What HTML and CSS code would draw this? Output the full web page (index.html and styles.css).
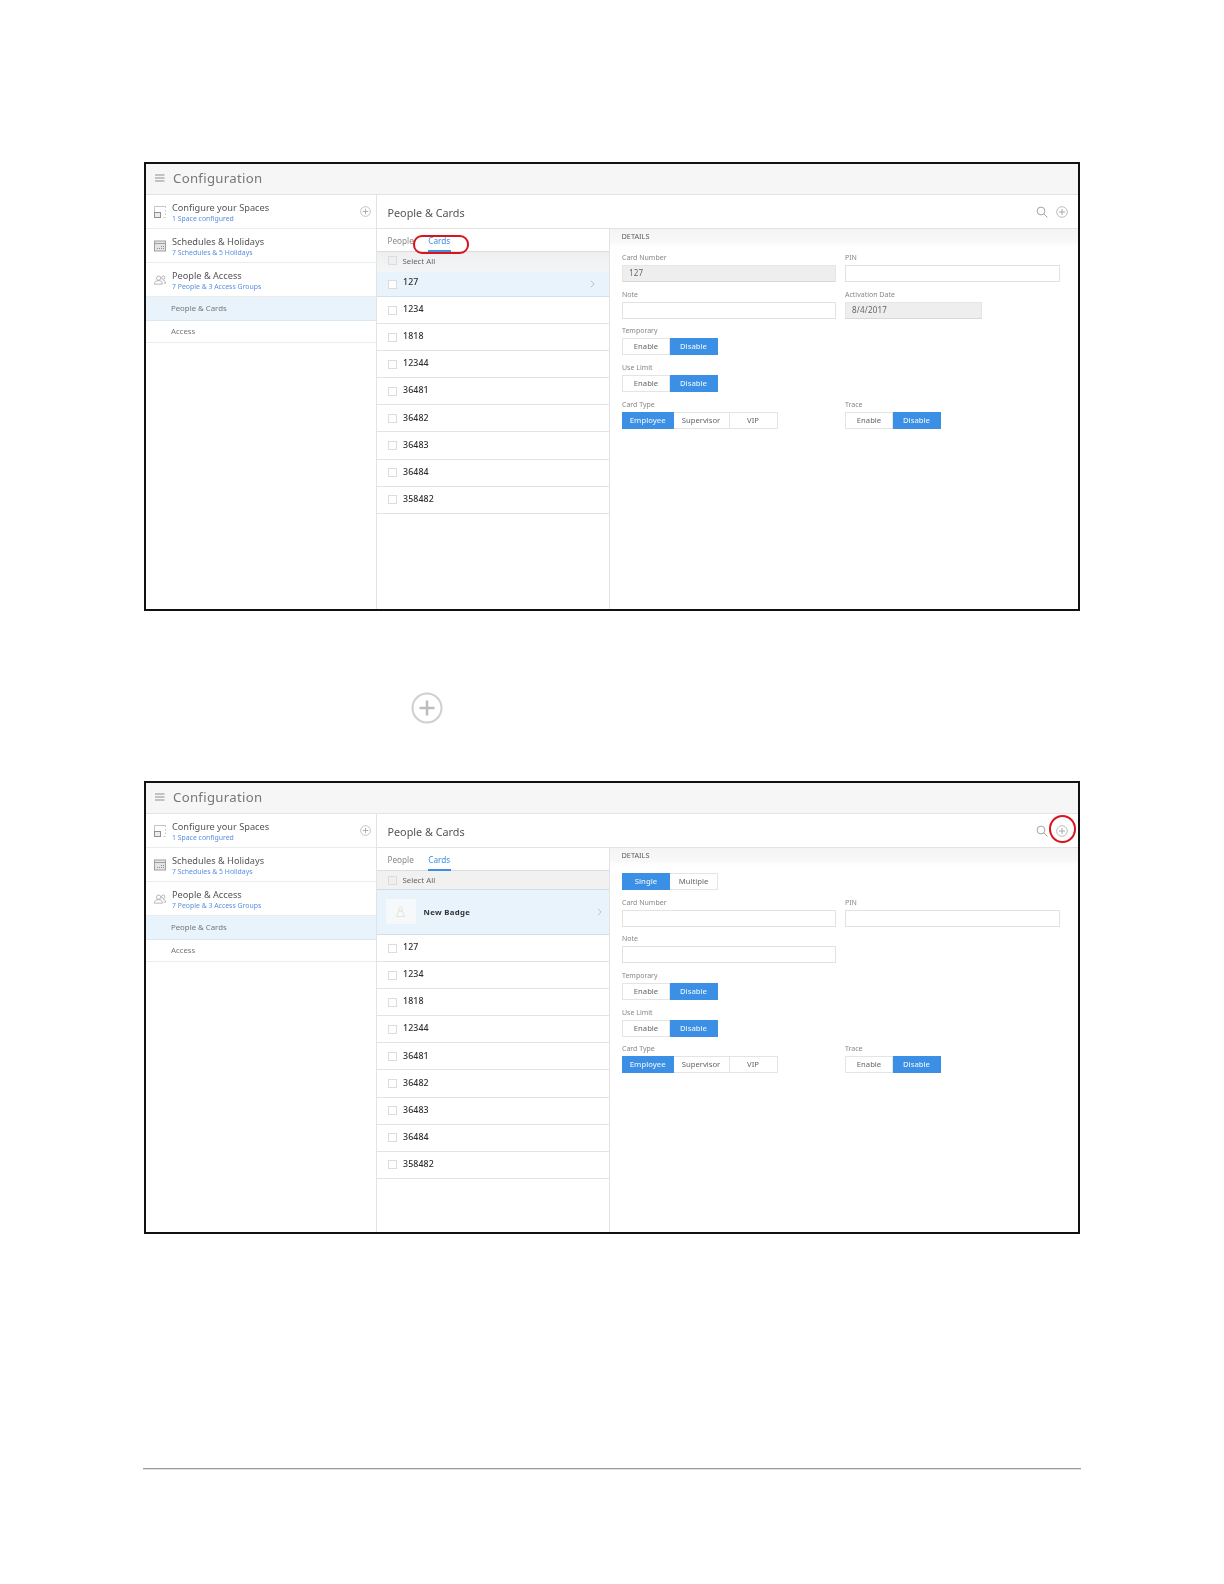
FILE: index.html
```html
<!DOCTYPE html>
<html lang="en">
<head>
<meta charset="utf-8">
<title>People &amp; Cards</title>
<link rel="stylesheet" href="styles.css">
</head>
<body>
<svg class="sprite" aria-hidden="true">
  <symbol id="i-plus" viewBox="0 0 12 12"><circle cx="6" cy="6" r="5.3" fill="none" stroke="#bdbdbd"/><path d="M6 3v6M3 6h6" stroke="#a8a8a8" fill="none"/></symbol>
  <symbol id="i-plus-big" viewBox="0 0 32 32"><circle cx="16" cy="16" r="14.500" fill="none" stroke="#cfcfcf" stroke-width="2"/><path d="M16 8.500v15M8.500 16h15" stroke="#bcbcbc" stroke-width="2.500" fill="none"/></symbol>
  <symbol id="i-search" viewBox="0 0 12 12"><circle cx="5" cy="5" r="3.9" fill="none" stroke="#a5a5a5"/><path d="M7.800 7.800L11.500 11.500" stroke="#a5a5a5" fill="none"/></symbol>
  <symbol id="i-menu" viewBox="0 0 10 8"><path d="M0 1h9.500M0 4h9.500M0 7h9.500" stroke="#8f8f8f" fill="none"/></symbol>
  <symbol id="i-space" viewBox="0 0 12 12"><path d="M.5 7V.5h11V2M11.500 4v1.500M11.500 7.500v1.500M9.500 11.500h2" fill="none" stroke="#c4c4c4"/><rect x=".5" y="6.500" width="6" height="5" fill="#ececec" stroke="#909090"/></symbol>
  <symbol id="i-cal" viewBox="0 0 12 12"><rect x=".5" y="1" width="11" height="10" fill="#e4e4e4" stroke="#a0a0a0"/><path d="M.5 3.500h11" stroke="#a0a0a0"/><path d="M7 6.500h1M9 6.500h1M3 8.500h1M5 8.500h1M7 8.500h1M9 8.500h1" stroke="#909090"/></symbol>
  <symbol id="i-people" viewBox="0 0 13 12"><circle cx="5" cy="4" r="2.300" fill="none" stroke="#a0a0a0" stroke-width=".8"/><path d="M.5 10.500c0-3 2-3.800 4.500-3.800s4 .8 4 3.800z" fill="none" stroke="#a0a0a0" stroke-width=".8"/><circle cx="10" cy="3.500" r="1.800" fill="none" stroke="#a0a0a0" stroke-width=".8"/><path d="M10 6.500c1.800 0 2.500 1 2.500 3h-2" fill="none" stroke="#a0a0a0" stroke-width=".8"/></symbol>
  <symbol id="i-chev" viewBox="0 0 6 10"><path d="M1 1l4 4-4 4" fill="none" stroke="#a9b4bc"/></symbol>
  <symbol id="i-badge" viewBox="0 0 12 14"><circle cx="6" cy="4" r="2" fill="none" stroke="#eadfce"/><path d="M1.500 12.500l2.500-6h4l2.500 6z" fill="none" stroke="#eadfce"/></symbol>
</svg>

<main class="page">

  <section class="window window-a">
    <header class="appbar"><svg class="ico-menu"><use href="#i-menu"/></svg><span class="appbar-title">Configuration</span></header>
    <div class="columns">
      <nav class="side">
        <div class="side-row"><svg class="ico-side"><use href="#i-space"/></svg><div class="side-text"><div class="side-title">Configure your Spaces</div><div class="side-sub">1 Space configured</div></div><svg class="ico-add-side"><use href="#i-plus"/></svg></div>
        <div class="side-row"><svg class="ico-side"><use href="#i-cal"/></svg><div class="side-text"><div class="side-title">Schedules &amp; Holidays</div><div class="side-sub">7 Schedules &amp; 5 Holidays</div></div></div>
        <div class="side-row"><svg class="ico-side"><use href="#i-people"/></svg><div class="side-text"><div class="side-title">People &amp; Access</div><div class="side-sub">7 People &amp; 3 Access Groups</div></div></div>
        <div class="side-link side-link-on">People &amp; Cards</div>
        <div class="side-link">Access</div>
      </nav>
      <div class="content">
        <div class="content-head"><h2 class="content-title">People &amp; Cards</h2><svg class="ico-search"><use href="#i-search"/></svg><svg class="ico-add"><use href="#i-plus"/></svg></div>
        <div class="panes">
          <div class="list">
            <div class="tabs"><span class="tab">People</span><span class="tab tab-on">Cards</span><span class="callout-cards"></span></div>
            <div class="select-all select-all-a"><span class="check"></span>Select All</div>
            <div class="row row-first row-on"><span class="check"></span><span class="num">127</span><svg class="ico-chev"><use href="#i-chev"/></svg></div>
            <div class="row"><span class="check"></span><span class="num">1234</span></div>
            <div class="row"><span class="check"></span><span class="num">1818</span></div>
            <div class="row"><span class="check"></span><span class="num">12344</span></div>
            <div class="row"><span class="check"></span><span class="num">36481</span></div>
            <div class="row"><span class="check"></span><span class="num">36482</span></div>
            <div class="row"><span class="check"></span><span class="num">36483</span></div>
            <div class="row"><span class="check"></span><span class="num">36484</span></div>
            <div class="row"><span class="check"></span><span class="num">358482</span></div>
          </div>
          <div class="details">
            <div class="details-head">DETAILS</div>
            <div class="form">
              <div class="field"><label class="label">Card Number</label><div class="input input-off">127</div></div>
              <div class="field"><label class="label">PIN</label><div class="input"></div></div>
              <div class="field"><label class="label">Note</label><div class="input"></div></div>
              <div class="field"><label class="label">Activation Date</label><div class="input input-off input-date">8/4/2017</div></div>
              <div class="field field-left"><label class="label">Temporary</label><div class="toggle"><span class="opt opt-48">Enable</span><span class="opt opt-48 opt-on">Disable</span></div></div>
              <div class="field field-left"><label class="label">Use Limit</label><div class="toggle"><span class="opt opt-48">Enable</span><span class="opt opt-48 opt-on">Disable</span></div></div>
              <div class="field field-left"><label class="label">Card Type</label><div class="toggle"><span class="opt opt-emp opt-on">Employee</span><span class="opt opt-sup">Supervisor</span><span class="opt opt-vip">VIP</span></div></div>
              <div class="field"><label class="label">Trace</label><div class="toggle"><span class="opt opt-48">Enable</span><span class="opt opt-48 opt-on">Disable</span></div></div>
            </div>
          </div>
        </div>
      </div>
    </div>
  </section>

  <div class="step-icon"><svg class="ico-big"><use href="#i-plus-big"/></svg></div>

  <section class="window window-b">
    <header class="appbar"><svg class="ico-menu"><use href="#i-menu"/></svg><span class="appbar-title">Configuration</span></header>
    <div class="columns">
      <nav class="side">
        <div class="side-row"><svg class="ico-side"><use href="#i-space"/></svg><div class="side-text"><div class="side-title">Configure your Spaces</div><div class="side-sub">1 Space configured</div></div><svg class="ico-add-side"><use href="#i-plus"/></svg></div>
        <div class="side-row"><svg class="ico-side"><use href="#i-cal"/></svg><div class="side-text"><div class="side-title">Schedules &amp; Holidays</div><div class="side-sub">7 Schedules &amp; 5 Holidays</div></div></div>
        <div class="side-row"><svg class="ico-side"><use href="#i-people"/></svg><div class="side-text"><div class="side-title">People &amp; Access</div><div class="side-sub">7 People &amp; 3 Access Groups</div></div></div>
        <div class="side-link side-link-on">People &amp; Cards</div>
        <div class="side-link">Access</div>
      </nav>
      <div class="content">
        <div class="content-head"><h2 class="content-title">People &amp; Cards</h2><svg class="ico-search"><use href="#i-search"/></svg><svg class="ico-add"><use href="#i-plus"/></svg><span class="callout-add"></span></div>
        <div class="panes">
          <div class="list">
            <div class="tabs"><span class="tab">People</span><span class="tab tab-on">Cards</span></div>
            <div class="select-all"><span class="check"></span>Select All</div>
            <div class="row-new"><span class="badge-thumb"><svg class="ico-badge"><use href="#i-badge"/></svg></span><span class="new-name">New Badge</span><svg class="ico-chev ico-chev-new"><use href="#i-chev"/></svg></div>
            <div class="row"><span class="check"></span><span class="num">127</span></div>
            <div class="row"><span class="check"></span><span class="num">1234</span></div>
            <div class="row"><span class="check"></span><span class="num">1818</span></div>
            <div class="row"><span class="check"></span><span class="num">12344</span></div>
            <div class="row"><span class="check"></span><span class="num">36481</span></div>
            <div class="row"><span class="check"></span><span class="num">36482</span></div>
            <div class="row"><span class="check"></span><span class="num">36483</span></div>
            <div class="row"><span class="check"></span><span class="num">36484</span></div>
            <div class="row"><span class="check"></span><span class="num">358482</span></div>
          </div>
          <div class="details">
            <div class="details-head">DETAILS</div>
            <div class="mode toggle"><span class="opt opt-48 opt-on">Single</span><span class="opt opt-48">Multiple</span></div>
            <div class="form form-new">
              <div class="field"><label class="label">Card Number</label><div class="input"></div></div>
              <div class="field"><label class="label">PIN</label><div class="input"></div></div>
              <div class="field field-left"><label class="label">Note</label><div class="input"></div></div>
              <div class="field field-left"><label class="label">Temporary</label><div class="toggle"><span class="opt opt-48">Enable</span><span class="opt opt-48 opt-on">Disable</span></div></div>
              <div class="field field-left"><label class="label">Use Limit</label><div class="toggle"><span class="opt opt-48">Enable</span><span class="opt opt-48 opt-on">Disable</span></div></div>
              <div class="field field-left"><label class="label">Card Type</label><div class="toggle"><span class="opt opt-emp opt-on">Employee</span><span class="opt opt-sup">Supervisor</span><span class="opt opt-vip">VIP</span></div></div>
              <div class="field"><label class="label">Trace</label><div class="toggle"><span class="opt opt-48">Enable</span><span class="opt opt-48 opt-on">Disable</span></div></div>
            </div>
          </div>
        </div>
      </div>
    </div>
  </section>

  <hr class="foot-rule">
</main>
</body>
</html>
```
FILE: styles.css
```css
* { box-sizing: border-box; }
html, body { margin: 0; padding: 0; background: #fff; }
body { font-family: "Noto Sans", "Open Sans", sans-serif; color: #555; }
.sprite { position: absolute; width: 0; height: 0; }
.page { padding: 162px 144px 0; height: 1584px; overflow: hidden; }

.window { width: 936px; border: 2.500px solid #111; display: flex; flex-direction: column; background: #fff; filter: blur(.3px); }
.window-a { height: 449px; }
.window-b { height: 453px; }

.appbar { height: 31px; flex: none; display: flex; align-items: center; padding: 0 0 2px 9px; background: #f6f6f6; border-bottom: 1px solid #e3e3e3; }
.ico-menu { width: 10px; height: 8px; margin-right: 8px; }
.appbar-title { font-size: 13.200px; color: #777; letter-spacing: .3px; }

.columns { flex: 1; display: flex; min-height: 0; }
.side { width: 230.500px; flex: none; border-right: 1px solid #e3e3e3; }
.side-row { height: 34px; display: flex; align-items: center; padding-left: 8px; border-bottom: 1px solid #ececec; position: relative; }
.ico-side { width: 12px; height: 12px; margin-right: 6px; flex: none; }
.side-text { flex: 1; padding-top: 2px; }
.side-title { font-size: 9.200px; line-height: 11px; margin-bottom: 1.500px; color: #555; }
.side-sub { font-size: 6.900px; line-height: 9px; color: #5a8fe0; }
.ico-add-side { width: 11px; height: 11px; margin-right: 5px; }
.side-link { height: 22.500px; padding-left: 25px; font-size: 7.800px; line-height: 20px; color: #777; border-bottom: 1px solid #ececec; }
.side-link-on { background: #e8f3fb; border-bottom-color: #dbe8f1; height: 23.500px; line-height: 23px; }

.content { flex: 1; display: flex; flex-direction: column; min-width: 0; }
.content-head { height: 34px; flex: none; display: flex; align-items: center; padding: 0 9px 0 11px; border-bottom: 1px solid #e3e3e3; position: relative; }
.content-title { flex: 1; margin: 0; padding-top: 2px; font-size: 10.800px; font-weight: 400; color: #555; }
.ico-search { width: 12px; height: 12px; margin-right: 8px; }
.ico-add { width: 12px; height: 12px; margin-right: 1px; }

.panes { flex: 1; display: flex; min-height: 0; }
.list { width: 233px; flex: none; border-right: 1px solid #e3e3e3; position: relative; }
.tabs { height: 23px; display: flex; gap: 14px; padding-left: 11px; border-bottom: 1px solid #ddd; position: relative; }
.tab { font-size: 8.200px; line-height: 23px; height: 23px; color: #888; }
.tab-on { color: #3d8fe0; border-bottom: 2px solid #3d8fe0; padding: 0 .5px; }

.select-all { height: 19px; display: flex; align-items: center; padding-left: 11px; font-size: 7.800px; color: #666; background: #f1f1f1; border-bottom: 1px solid #cfdde7; }
.select-all-a { height: 20px; padding-bottom: 3px; border-bottom: 0; background: linear-gradient(#efefef, #f3f5f6); }
.check { width: 9px; height: 9px; border: 1px solid #dcdcdc; background: #fff; margin-right: 6px; flex: none; }
.select-all .check { background: #efefef; }

.row { height: 27.100px; display: flex; align-items: center; padding-left: 11px; border-bottom: 1px solid #e3e3e3; }
.row-first { height: 25px; }
.row-on { background: #e8f3fb; border-bottom-color: #cfe0ee; position: relative; }
.num { font-size: 8.800px; font-weight: 500; line-height: 1; color: #2e2e2e; letter-spacing: .1px; padding-bottom: 1px; margin-left: .5px; }
.row-first .num { padding-bottom: 4px; }
.ico-chev { width: 5px; height: 8px; margin-left: auto; margin-right: 14px; }
.ico-chev-new { margin-right: 7px; }

.row-new { height: 45px; display: flex; align-items: center; padding: 0 0 1px 9px; background: #e8f3fb; border-bottom: 1px solid #cfe0ee; }
.badge-thumb { width: 30px; height: 25px; margin-right: 8px; background: #f5f9fb; display: flex; align-items: center; justify-content: center; }
.ico-badge { width: 11px; height: 13px; }
.new-name { font-size: 7.800px; font-weight: 700; color: #333; letter-spacing: .3px; }

.details { flex: 1; min-width: 0; }
.details-head { height: 18px; padding-left: 12px; font-size: 7.300px; line-height: 15px; color: #5c5c5c; background: linear-gradient(#f4f4f4, #f8f8f8 70%, #fff); }
.mode { margin: 6.500px 0 0 12.500px; }
.form { display: grid; grid-template-columns: 214px 215px; column-gap: 9px; row-gap: 8.700px; padding: 7px 0 0 12.500px; }
.form-new { padding-top: 9px; }
.field-left { grid-column: 1; }
.label { display: block; font-size: 7px; line-height: 7px; height: 11px; color: #888; }
.input { height: 17px; border: 1px solid #e2e2e2; background: #fff; padding-left: 6px; font-size: 8px; line-height: 14px; color: #666; letter-spacing: .2px; }
.input-off { background: #eeeeee; border-color: #e6e6e6; border-bottom-color: #d8d8d8; }
.input-date { width: 137px; }

.toggle { display: flex; height: 17px; }
.opt { display: flex; align-items: center; justify-content: center; padding-bottom: 1px; font-size: 7.700px; color: #666; background: #fff; border: 1px solid #e4e4e4; border-left-width: 0; }
.opt:first-child { border-left-width: 1px; }
.opt-48 { width: 48px; }
.opt-emp { width: 51.500px; }
.opt-sup { width: 56px; }
.opt-vip { width: 48px; }
.opt-on { background: #3b8fe4; border-color: #3b8fe4; color: #e6f1fb; font-weight: 500; }

.callout-cards { position: absolute; left: 36px; top: 5.500px; width: 56px; height: 19.500px; border: 2px solid #d8141c; border-radius: 9px; }
.callout-add { position: absolute; right: 2.500px; top: 1px; width: 27px; height: 28px; border: 2px solid #d8141c; border-radius: 50%; }

.step-icon { height: 170px; padding: 81px 0 0 266.500px; }
.ico-big { width: 32px; height: 32px; display: block; }

.foot-rule { margin: 234px -1px 0; border: 0; border-top: 1px solid #9a9a9a; border-bottom: 1px solid #e2e2e2; height: 2px; }
```
